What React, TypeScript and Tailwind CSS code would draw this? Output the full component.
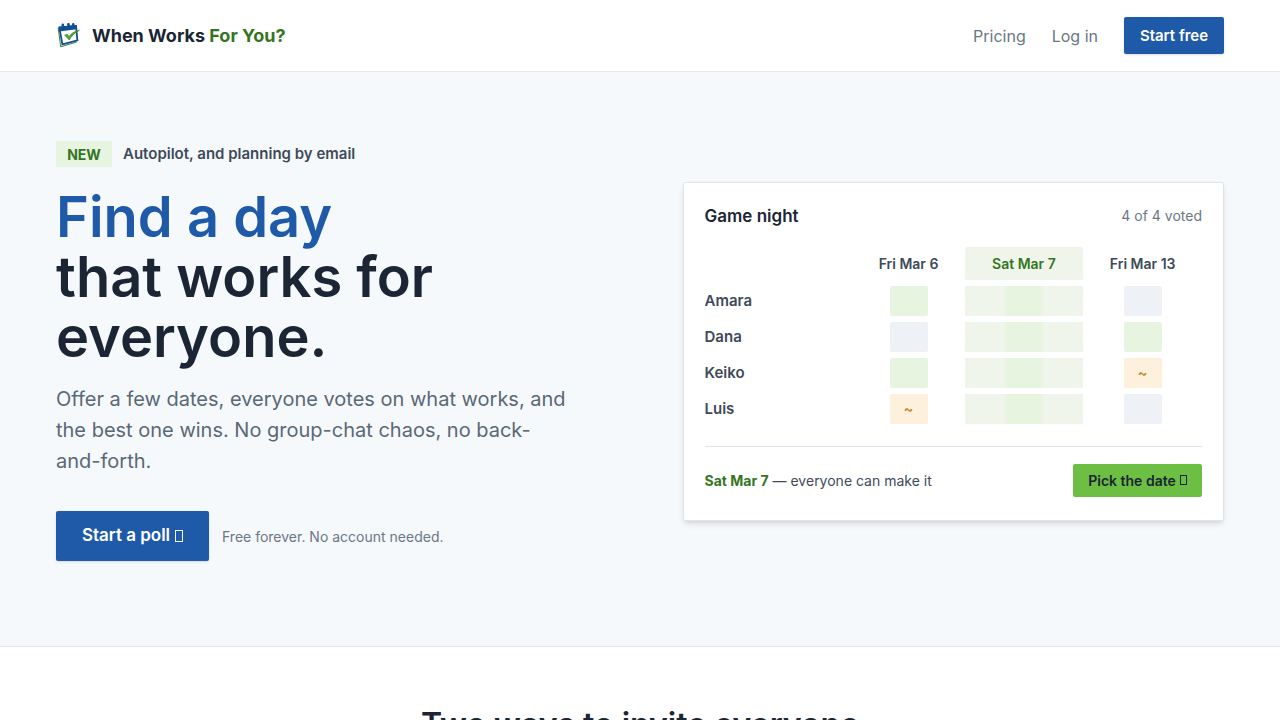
type Vote = "yes" | "no" | "maybe";

const DATES = ["Fri Mar 6", "Sat Mar 7", "Fri Mar 13"];
const WINNER = 1;

const VOTERS: { name: string; votes: Vote[] }[] = [
  { name: "Amara", votes: ["yes", "yes", "no"] },
  { name: "Dana", votes: ["no", "yes", "yes"] },
  { name: "Keiko", votes: ["yes", "yes", "maybe"] },
  { name: "Luis", votes: ["maybe", "yes", "no"] },
];

const VOTE_STYLE: Record<Vote, string> = {
  yes: "bg-[#e7f4df]",
  no: "bg-[#eef2f7]",
  maybe: "bg-[#fdf0dd]",
};

function Logo() {
  return (
    <svg width="24" height="25" viewBox="0 0 24 25" fill="none" aria-hidden="true">
      <path d="M2.2 5 4.7 23.8 20.8 19" stroke="#3f7f3a" strokeWidth="1" />
      <path d="M3.4 4.8 20 3 21.4 17.4 6.4 21.4Z" fill="#fff" stroke="#0f4f96" strokeWidth="1.8" />
      <path d="M2.6 3.6 20.4 2 20.9 6.2 3.2 8.4Z" fill="#0f4f96" />
      <path d="M6.8 1.8 7.2 5M12.4 1.2 12.8 4.4M17.2 1.4 17.6 4" stroke="#0f4f96" strokeWidth="2.6" strokeLinecap="round" />
      <path d="M8.6 12 11.4 11.4 13 13.8C15 10.6 18 8.2 23.4 7.2 18.8 9.6 15.8 12.6 13.2 17Z" fill="#55a630" stroke="#2f7d27" strokeWidth=".6" />
    </svg>
  );
}

function Box({ className }: { className: string }) {
  return <span aria-hidden="true" className={`inline-block border border-current ${className}`} />;
}

function Header() {
  return (
    <header className="border-b border-[#e4e9f0] bg-white">
      <div className="mx-auto flex max-w-[1168px] items-center justify-between py-[17px]">
        <a href="#" className="flex items-center gap-3 text-[18px] font-bold text-[#1b2534]">
          <Logo />
          <span>
            When Works <span className="text-[#34761f]">For You?</span>
          </span>
        </a>
        <nav className="flex items-center gap-[26px] text-[16px] leading-[22px] text-[#6b7785]">
          <a href="#pricing">Pricing</a>
          <a href="#login">Log in</a>
          <a
            href="#start"
            className="flex h-[37px] w-[100px] items-center justify-center rounded-xs bg-[#1e5aa8] text-[15px] font-semibold text-white shadow-sm"
          >
            Start free
          </a>
        </nav>
      </div>
    </header>
  );
}

function PollCard() {
  return (
    <section className="rounded-xs border border-[#dde5ee] bg-white px-[21px] pt-[21px] pb-[23px] shadow-md">
      <div className="flex items-center justify-between">
        <h2 className="text-[17px] leading-6 font-semibold text-[#1b2534]">Game night</h2>
        <span className="text-[14px] text-[#6b7785]">4 of 4 voted</span>
      </div>

      <table className="mt-[13px] w-full table-fixed border-separate border-spacing-x-0 border-spacing-y-[6px] text-[14px]">
        <thead>
          <tr className="h-[33px]">
            <td className="w-[148px]" />
            {DATES.map((date, i) => (
              <th
                key={date}
                scope="col"
                className={`p-0 font-semibold ${i === 0 ? "w-[112px]" : ""} ${i === WINNER ? "rounded-xs bg-[#eff5ea] text-[#34761f]" : "text-[#3e4a59]"}`}
              >
                {date}
              </th>
            ))}
          </tr>
        </thead>
        <tbody>
          {VOTERS.map(voter => (
            <tr key={voter.name}>
              <th scope="row" className="p-0 text-left text-[15px] leading-5 font-semibold text-[#3e4a59]">{voter.name}</th>
              {voter.votes.map((vote, i) => (
                <td key={DATES[i]} className={`p-0 ${i === WINNER ? "bg-[#eff5ea]" : ""}`}>
                  <div className={`mx-auto flex h-[30px] w-[38px] items-center justify-center rounded-xs font-bold text-[#c98a2b] ${VOTE_STYLE[vote]}`}>
                    {vote === "maybe" && "~"}
                  </div>
                </td>
              ))}
            </tr>
          ))}
        </tbody>
      </table>

      <div className="mt-4 flex items-center justify-between border-t border-[#dde5ee] pt-[17px]">
        <p className="text-[14px] text-[#3e4a59]">
          <strong className="font-bold text-[#34761f]">Sat Mar 7</strong> — everyone can make it
        </p>
        <button type="button" className="flex h-[33px] w-[129px] items-center justify-center gap-1 rounded-xs bg-[#6cbf43] text-[14px] font-semibold text-[#1b2534]">
          Pick the date <Box className="h-[10px] w-[7px]" />
        </button>
      </div>
    </section>
  );
}

function Hero() {
  return (
    <div className="border-b border-[#dde5ee] bg-[#f5f9fc]">
      <div className="mx-auto grid max-w-[1168px] grid-cols-[1.05fr_1fr] items-center gap-[58px] pt-[69px] pb-[85px]">
        <div>
          <div className="flex items-center gap-[11px]">
            <span className="flex h-[26px] w-14 items-center justify-center rounded-xs bg-[#e7f4df] text-[14px] font-bold text-[#34761f]">
              NEW
            </span>
            <span className="text-[15px] font-semibold text-[#3e4a59]">Autopilot, and planning by email</span>
          </div>
          <h1 className="mt-5 text-[56px] leading-[60px] font-semibold text-[#1b2534]">
            <span className="text-[#1e5aa8]">Find a day</span>
            <br />
            that works for
            <br />
            everyone.
          </h1>
          <p className="mt-[17px] max-w-[512px] text-[20px] leading-[31px] text-[#5b6876]">
            Offer a few dates, everyone votes on what works, and the best one wins. No group-chat chaos, no back-and-forth.
          </p>
          <div className="mt-[34px] flex items-center gap-[13px]">
            <button type="button" className="flex h-[50px] w-[153px] items-center justify-center gap-[5px] rounded-xs bg-[#1e5aa8] text-[17px] font-semibold text-white shadow-sm">
              Start a poll <Box className="h-3 w-2" />
            </button>
            <span className="text-[14px] text-[#6b7785]">Free forever. No account needed.</span>
          </div>
        </div>
        <PollCard />
      </div>
    </div>
  );
}

export default function App() {
  return (
    <div className="min-h-screen bg-white font-['Inter',sans-serif]">
      <Header />
      <main>
        <Hero />
        <section className="pt-[58px]">
          <h2 className="text-center text-[32px] leading-10 font-semibold text-[#1b2534]">Two ways to invite everyone</h2>
        </section>
      </main>
    </div>
  );
}
